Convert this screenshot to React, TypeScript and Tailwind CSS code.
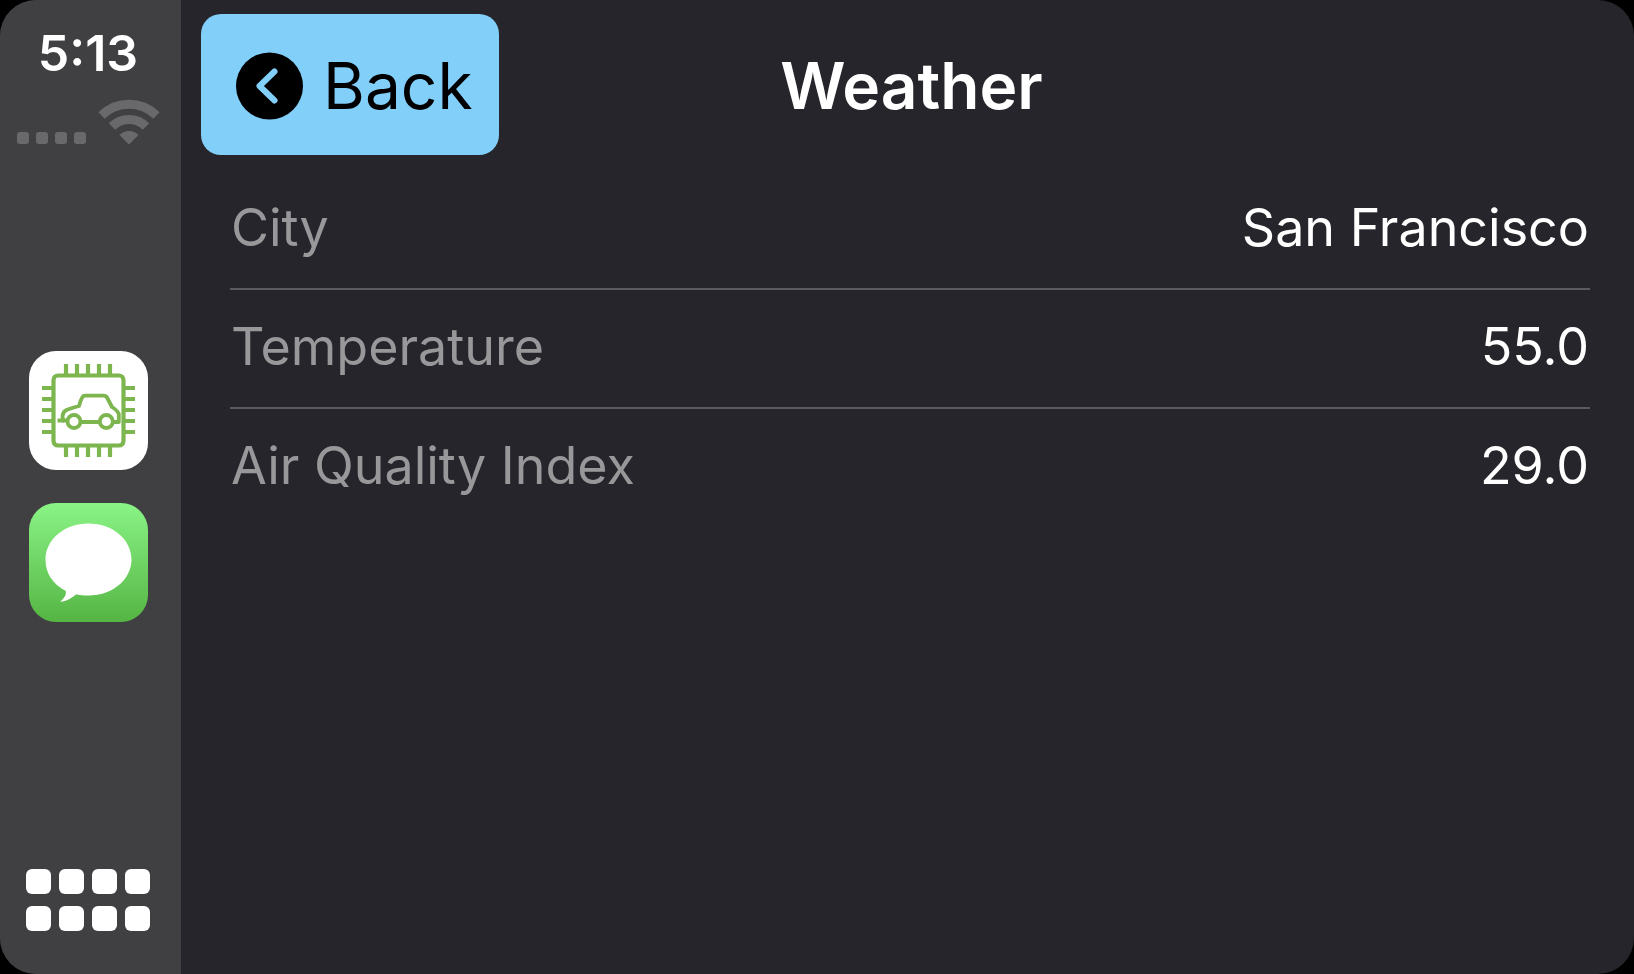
import React from "react";

type Reading = { label: string; value: string };

const readings: Reading[] = [
  { label: "City", value: "San Francisco" },
  { label: "Temperature", value: "55.0" },
  { label: "Air Quality Index", value: "29.0" },
];

const pins = [37, 48, 59, 70, 81];

function WifiIcon() {
  return (
    <svg viewBox="0 0 62 46" className="h-[46px] w-[62px]" aria-hidden="true">
      <g fill="none" stroke="currentColor" strokeWidth="9">
        <path d="M3.5 16.5A39.5 39.5 0 0 1 58.500 16.500" />
        <path d="M14 27.500A24 24 0 0 1 48 27.500" />
      </g>
      <path fill="currentColor" d="M31 45.500L21.500 36A13.500 13.500 0 0 1 40.500 36Z" />
    </svg>
  );
}

function ChipCarIcon() {
  return (
    <svg viewBox="0 0 119 119" className="size-full" aria-hidden="true">
      <g fill="none" stroke="#7db54f" strokeWidth="4.200">
        <rect x="24.500" y="24.500" width="70" height="70" rx="4.500" />
        {pins.map((p) => (
          <path key={p} d={`M${p} 13V24M${p} 95V106M13 ${p}H24M95 ${p}H106`} />
        ))}
        <g strokeWidth="3.800" strokeLinejoin="round">
          <path d="M38.500 69.500H34L33.500 65Q34 60.500 38 58.800Q44 56.500 50 55Q51.500 49 53.500 46Q54.300 44.700 56 44.700H74.500Q77 44.700 78 46.500L83 56Q88.500 59.500 89.800 63V71H83.500" />
          <path d="M28.500 69.500H35M51.500 71H71" />
          <circle cx="45" cy="70.500" r="6.500" />
          <circle cx="77.300" cy="70.500" r="6.500" />
        </g>
      </g>
    </svg>
  );
}

function MessagesIcon() {
  return (
    <svg viewBox="0 0 119 119" className="size-full" aria-hidden="true">
      <path
        fill="#fff"
        d="M59.500 20.500C83.500 20.500 102.500 36.500 102.500 56.500C102.500 76.500 83.500 92.500 59.500 92.500C55 92.500 51 92.200 47.500 91.200C43 94.500 37.500 98.500 31 98.800C34.500 96 37.500 92.500 36.800 88C24 81.500 16.500 70.500 16.500 56.500C16.500 36.500 35.500 20.500 59.500 20.500Z"
      />
    </svg>
  );
}

function BackIcon() {
  return (
    <svg viewBox="0 0 68 68" className="size-[68px]" aria-hidden="true">
      <circle cx="34.500" cy="34" r="33.500" fill="#000" />
      <path
        d="M39.500 19.500L24.500 34L39.500 48.500"
        fill="none"
        stroke="#82cffa"
        strokeWidth="6"
        strokeLinecap="round"
        strokeLinejoin="round"
      />
    </svg>
  );
}

function Sidebar() {
  return (
    <aside className="flex w-[181px] shrink-0 flex-col items-center bg-[#404042] pt-6 pr-[5px] pb-[43px]">
      <time className="text-[50px] leading-[58px] font-semibold text-white">5:13</time>
      <div className="mt-[17px] flex items-end gap-3 text-[#69696b]">
        <div className="flex gap-[7px] pb-px">
          {[0, 1, 2, 3].map((n) => (
            <span key={n} className="size-3 rounded-[3px] bg-current" />
          ))}
        </div>
        <WifiIcon />
      </div>
      <nav className="mt-[206px] flex flex-col gap-[33px]">
        <button
          type="button"
          aria-label="Car dashboard"
          className="size-[119px] overflow-hidden rounded-[27px] bg-white"
        >
          <ChipCarIcon />
        </button>
        <button
          type="button"
          aria-label="Messages"
          className="size-[119px] overflow-hidden rounded-[27px] bg-linear-to-b from-[#8af486] to-[#55b543]"
        >
          <MessagesIcon />
        </button>
      </nav>
      <button
        type="button"
        aria-label="All apps"
        className="mt-auto grid grid-cols-4 gap-x-2 gap-y-3"
      >
        {[0, 1, 2, 3, 4, 5, 6, 7].map((n) => (
          <span key={n} className="size-[25px] rounded-[6px] bg-white" />
        ))}
      </button>
    </aside>
  );
}

export default function App() {
  return (
    <div className="min-h-screen bg-black font-['Inter',sans-serif]">
      <div className="flex min-h-screen overflow-hidden rounded-[36px] bg-[#26252b]">
        <Sidebar />
        <main className="min-w-0 flex-1">
          <header className="grid grid-cols-[1fr_auto_1fr] items-center pt-3.5 pr-3 pl-5">
            <button
              type="button"
              className="flex h-[141px] items-center gap-5 justify-self-start rounded-[20px] bg-[#82cffa] pt-0.5 pr-[26px] pl-[34px] text-[64px] leading-none text-black"
            >
              <BackIcon />
              Back
            </button>
            <h1 className="pt-0.5 text-[64px] leading-none font-semibold text-white">Weather</h1>
          </header>
          <dl className="mt-4 mr-11 ml-[49px] text-[52px] leading-none">
            {readings.map((r) => (
              <div
                key={r.label}
                className="flex h-[119px] items-center justify-between gap-6 border-b-2 border-[#5b5b5f] px-px pb-[3px] last:border-transparent"
              >
                <dt className="text-[#98989b]">{r.label}</dt>
                <dd className="text-white">{r.value}</dd>
              </div>
            ))}
          </dl>
        </main>
      </div>
    </div>
  );
}
